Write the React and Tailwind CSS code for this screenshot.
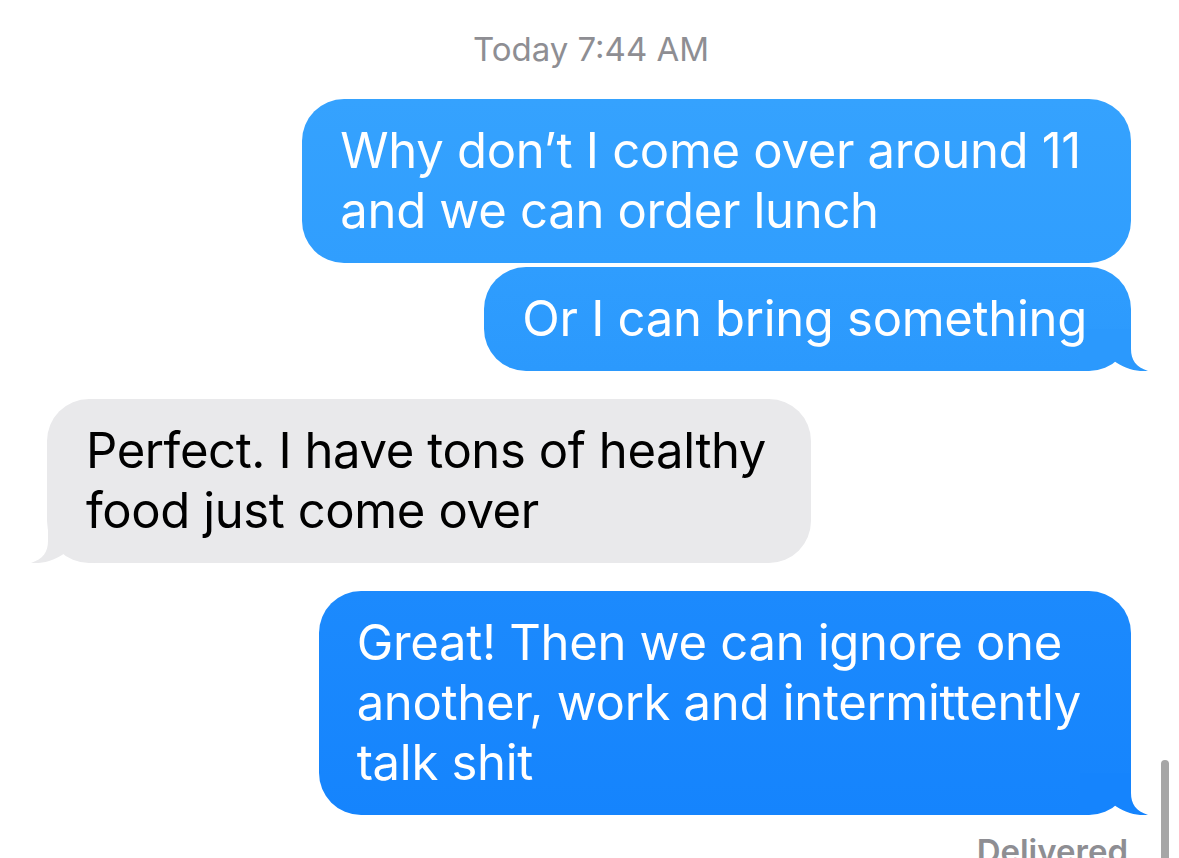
import React from 'react'

const FONT = { fontFamily: 'Inter, "Noto Sans", "Liberation Sans", sans-serif' }

// 말풍선 꼬리 (오른쪽)
function TailRight({ color }) {
  return (
    <svg className="absolute right-[-17px] bottom-0" width="68" height="42" viewBox="0 0 68 42">
      <path
        d="M0 0 L51 0 L51 20 C51 31 56 38 68 42 C58 43 44 40 33 31 C25 38 14 42 0 42 Z"
        fill={color}
      />
    </svg>
  )
}

// 말풍선 꼬리 (왼쪽)
function TailLeft({ color }) {
  return (
    <svg className="absolute left-[-16px] bottom-0" width="68" height="42" viewBox="0 0 68 42">
      <path
        d="M68 0 L17 0 L17 20 C17 31 12 38 0 42 C10 43 24 40 35 31 C43 38 54 42 68 42 Z"
        fill={color}
      />
    </svg>
  )
}

function Sent({ lines, from, to, tail, className = '', pr = 'pr-[50px]' }) {
  return (
    <div className={'flex justify-end ' + className}>
      <div
        className={'relative rounded-[42px] pl-[38px] py-[22px] text-white text-[49px] leading-[60px] tracking-[-0.3px] ' + pr}
        style={{ background: `linear-gradient(to bottom, ${from}, ${to})` }}
      >
        {lines.map((l, i) => (
          <div key={i} className="relative z-10 whitespace-nowrap">{l}</div>
        ))}
        {tail && <TailRight color={to} />}
      </div>
    </div>
  )
}

export default function App() {
  return (
    <div className="relative w-[1179px] h-[858px] overflow-hidden bg-white" style={FONT}>
      <div className="flex flex-col pl-[47px] pr-[48px]">
        {/* 시간 */}
        <div className="pt-[30px] text-center text-[33px] leading-[38px] text-[#8e8e93] pl-[4px]">
          Today 7:44 AM
        </div>

        <Sent
          className="mt-[31px]"
          lines={['Why don’t I come over around 11', 'and we can order lunch']}
          from="#35a2fe"
          to="#309efe"
        />
        <Sent
          className="mt-[4px]"
          lines={['Or I can bring something']}
          from="#2f9dfe"
          to="#2b99fd"
          pr="pr-[44px]"
          tail
        />

        {/* 받은 메시지 */}
        <div className="mt-[28px] flex justify-start">
          <div className="relative rounded-[42px] bg-[#e9e9eb] pl-[39px] pr-[45px] py-[22px] text-black text-[49px] leading-[60px] tracking-[-0.4px]">
            <div className="relative z-10 whitespace-nowrap">Perfect. I have tons of healthy</div>
            <div className="relative z-10 whitespace-nowrap">food just come over</div>
            <TailLeft color="#e9e9eb" />
          </div>
        </div>

        <Sent
          className="mt-[28px]"
          lines={['Great! Then we can ignore one', 'another, work and intermittently', 'talk shit']}
          from="#1c8afd"
          to="#1584fd"
          tail
        />

        <div className="mt-[16px] flex justify-end pr-[3px] text-[33px] leading-[40px] font-semibold text-[#8e8e93]">
          Delivered
        </div>
      </div>

      {/* 스크롤바 */}
      <div className="absolute left-[1161px] top-[760px] w-[8px] h-[120px] rounded-full bg-[#a6a6a6]" />
    </div>
  )
}
